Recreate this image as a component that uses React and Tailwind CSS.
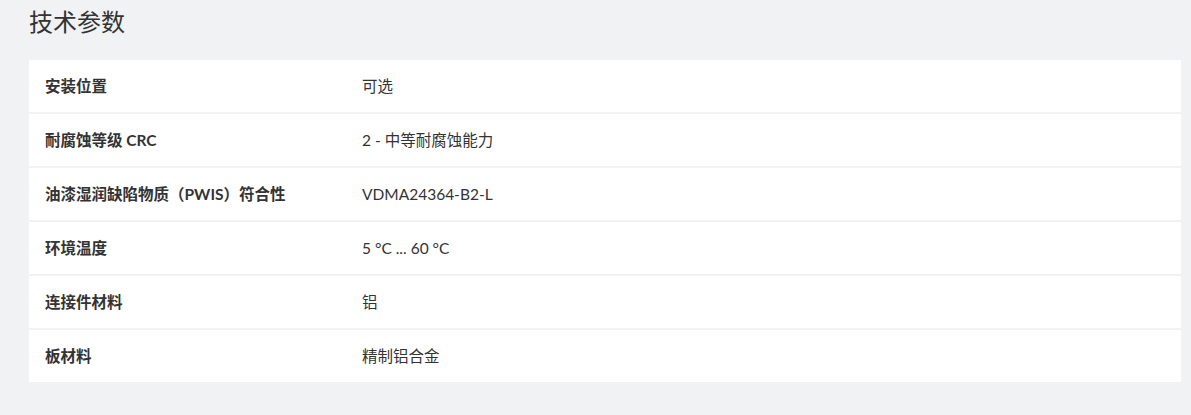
import React from 'react';

const specs = [
  { label: '安装位置', value: '可选' },
  { label: '耐腐蚀等级 CRC', value: '2 - 中等耐腐蚀能力' },
  { label: '油漆湿润缺陷物质（PWIS）符合性', value: 'VDMA24364-B2-L' },
  { label: '环境温度', value: '5 °C ... 60 °C' },
  { label: '连接件材料', value: '铝' },
  { label: '板材料', value: '精制铝合金' },
];

export default function App() {
  return (
    <div
      className="min-h-[415px] bg-[#f1f2f4] pl-[29px] pr-[10px] pt-[5px] text-[#333]"
      style={{ fontFamily: 'Lato, "Noto Sans CJK SC", sans-serif' }}
    >
      {/* Titre */}
      <h2 className="h-[34px] text-[24px] leading-[34px] font-normal">技术参数</h2>

      {/* Tableau */}
      <div className="mt-[21px] flex flex-col gap-[2px]">
        {specs.map((row) => (
          <div key={row.label} className="flex h-[52px] items-center bg-white pl-4 text-[15.5px] leading-6">
            <div className="w-[317px] shrink-0 font-bold">{row.label}</div>
            <div>{row.value}</div>
          </div>
        ))}
      </div>
    </div>
  );
}
